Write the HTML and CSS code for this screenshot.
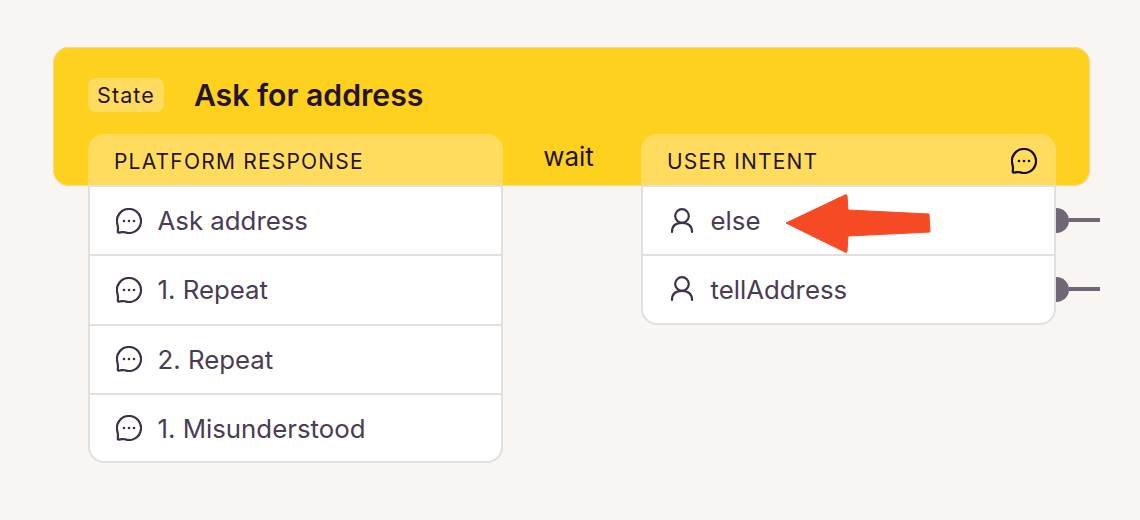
FILE: index.html
```html
<!DOCTYPE html>
<html lang="en">
<head>
<meta charset="UTF-8">
<meta name="viewport" content="width=device-width, initial-scale=1.0">
<title>Ask for address</title>
<link rel="stylesheet" href="styles.css">
</head>
<body>
<svg width="0" height="0" class="defs">
    <symbol id="chat" viewBox="0 0 26 26">
        <path d="M13 1a12 12 0 1 1-4 23.300c-1-.3-2-.3-3-.2l-3.200.5c-.7.1-1-.2-1-.9l.2-3.700c0-1-.2-1.800-.6-3.700A12 12 0 0 1 13 1z" fill="none" stroke="currentColor" stroke-width="2.200" stroke-linejoin="round"/>
        <circle cx="8" cy="13" r="1.300" fill="currentColor"/>
        <circle cx="13" cy="13" r="1.300" fill="currentColor"/>
        <circle cx="18" cy="13" r="1.300" fill="currentColor"/>
    </symbol>
    <symbol id="user" viewBox="0 0 26 26">
        <circle cx="13" cy="8" r="6.800" fill="none" stroke="currentColor" stroke-width="2.200"/>
        <path d="M3 24c0-6 3.700-9.200 10-9.200S23 18 23 24" fill="none" stroke="currentColor" stroke-width="2.200" stroke-linecap="round"/>
    </symbol>
</svg>

<div class="state">
    <div class="state-head">
        <span class="badge">State</span>
        <h1>Ask for address</h1>
    </div>
    <div class="columns">
        <div class="panel">
            <div class="panel-title">PLATFORM RESPONSE</div>
            <div class="row"><svg class="icon"><use href="#chat"/></svg>Ask address</div>
            <div class="row"><svg class="icon"><use href="#chat"/></svg>1. Repeat</div>
            <div class="row"><svg class="icon"><use href="#chat"/></svg>2. Repeat</div>
            <div class="row"><svg class="icon"><use href="#chat"/></svg>1. Misunderstood</div>
        </div>
        <div class="wait">wait</div>
        <div class="panel">
            <div class="panel-title">USER INTENT<svg class="icon icon-head"><use href="#chat"/></svg></div>
            <div class="row"><svg class="icon"><use href="#user"/></svg>else<span class="port"></span></div>
            <div class="row"><svg class="icon"><use href="#user"/></svg>tellAddress<span class="port"></span></div>
        </div>
    </div>
</div>

<!-- annotation drawn on top of the screenshot -->
<svg class="arrow" width="150" height="62" viewBox="0 0 150 62">
    <path d="M2 30 L61 2 Q63 1 63 3 L64 17 L145 21 L146 39 L64 43 L63 58 Q63 60 61 59 Z" fill="#f64a24" stroke="#f64a24" stroke-width="1" stroke-linejoin="round"/>
</svg>
</body>
</html>
```

FILE: styles.css
```css
* {
    box-sizing: border-box;
}

html, body {
    height: 100%;
}

body {
    margin: 0;
    padding: 47px 50px 0 53px;
    font-family: Inter, "Noto Sans", sans-serif;
    background-color: #f8f5f2;
    color: #251431;
    overflow: hidden;
}

.defs {
    display: block;
}

.state {
    height: 139px;
    padding: 31px 34px 0 35px;
    background-color: #ffd11f;
    border-radius: 16px;
    box-shadow: inset 0 0 0 1px #f0dc8c;
}

.state-head {
    display: flex;
    align-items: center;
    gap: 30px;
    height: 34px;
}

.badge {
    padding: 0 9px;
    height: 34px;
    line-height: 35px;
    font-size: 21.500px;
    letter-spacing: 1.100px;
    background-color: #ffdc5e;
    border-radius: 8px;
}

h1 {
    margin: 0;
    font-size: 30.200px;
    font-weight: 600;
}

.columns {
    display: flex;
    justify-content: space-between;
    align-items: flex-start;
    margin-top: 22px;
}

.panel {
    width: 415px;
}

.wait {
    margin-right: 7px;
    padding-top: 7px;
    font-size: 26px;
}

.panel-title {
    display: flex;
    align-items: center;
    justify-content: space-between;
    height: 51px;
    padding: 3px 19px 0 26px;
    font-size: 21px;
    letter-spacing: 1.200px;
    background-color: #ffdc5e;
    border-radius: 16px 16px 0 0;
}

.row {
    position: relative;
    display: flex;
    align-items: center;
    height: 69.300px;
    padding: 0 0 0 26px;
    font-size: 25.800px;
    color: #4a3c52;
    background-color: #fff;
    border: 2px solid #e3dfdc;
    border-bottom: 0;
}

.row:last-child {
    height: 70.300px;
    border-bottom: 2px solid #e3dfdc;
    border-radius: 0 0 16px 16px;
}

.icon {
    flex: none;
    width: 26px;
    height: 26px;
    margin-right: 15.500px;
    color: #3f304a;
}

.icon-head {
    margin-right: 0;
    color: #110a05;
}

.port {
    position: absolute;
    right: -46px;
    top: 21px;
    width: 46px;
    height: 25px;
}

.port::before {
    content: "";
    position: absolute;
    left: 2px;
    top: 0;
    width: 13px;
    height: 25px;
    background-color: #6f6676;
    border-radius: 0 13px 13px 0;
}

.port::after {
    content: "";
    position: absolute;
    left: 15px;
    top: 10px;
    width: 31px;
    height: 4px;
    background-color: #6f6676;
}

.arrow {
    position: absolute;
    left: 784px;
    top: 193px;
}
```
